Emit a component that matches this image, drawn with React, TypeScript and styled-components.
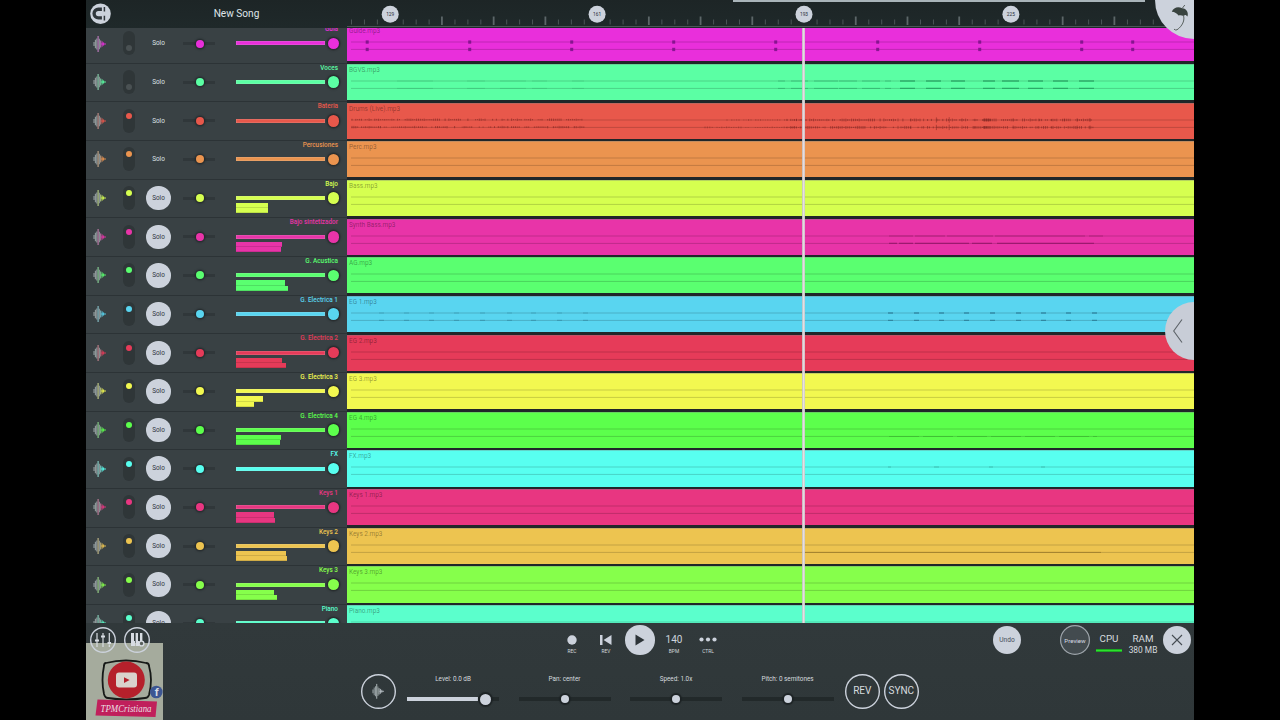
import React from "react";
import styled, { createGlobalStyle } from "styled-components";

const GlobalStyle = createGlobalStyle`
  * { box-sizing: border-box; }
  body { margin: 0; background: #000; font-family: Roboto, "Liberation Sans", sans-serif; }
`;

const LIGHT = "#ccd2dc";

const Stage = styled.div`
  width: 1280px;
  height: 720px;
  display: flex;
  justify-content: center;
  background: #000;
  overflow: hidden;
`;

const Studio = styled.div`
  position: relative;
  width: 1108px;
  height: 720px;
  display: flex;
  flex-direction: column;
  overflow: hidden;
  background: #30383a;
`;

const Header = styled.header`
  height: 28px;
  flex: none;
  display: grid;
  grid-template-columns: 29px 243px 836px;
  background: linear-gradient(#1d2526, #1f292a);
`;

const Magnet = styled.div`
  padding: 3px 0 0 4px;
  svg { display: block; }
`;

const SongTitle = styled.div`
  text-align: center;
  font-size: 10.1px;
  line-height: 27px;
  color: #dfe4e8;
`;

const RulerBox = styled.div`
  margin-left: -11px;
  svg { display: block; }
`;

const Workspace = styled.main`
  height: 595px;
  flex: none;
  overflow: hidden;
  background: #2b3135;
`;

const TrackList = styled.div`
  margin-top: -3.83px;
`;

const TrackRow = styled.div`
  height: 38.67px;
  display: grid;
  grid-template-columns: 261px 847px;
`;

const Strip = styled.div`
  display: grid;
  grid-template-columns: 27px 32px 27px 54px 121px;
  align-items: center;
  box-shadow: inset 0 1px 0 #2c3336;
  background: #394144;
  height: 38.67px;
`;

const WaveCell = styled.div`
  padding-left: 7px;
  svg { display: block; }
`;

const Mute = styled.div<{ $on: boolean }>`
  width: 12px;
  height: 24px;
  justify-self: center;
  border-radius: 6px;
  background: #2f3638;
  display: flex;
  justify-content: center;
  align-items: ${(p) => (p.$on ? "flex-start" : "flex-end")};
  padding: ${(p) => (p.$on ? "4px 0 0" : "0 0 4px")};
  margin-top: ${(p) => (p.$on ? "0" : "-1px")};
`;

const MuteDot = styled.div<{ $c: string }>`
  width: 6px;
  height: 6px;
  border-radius: 50%;
  background: ${(p) => p.$c};
`;

const Solo = styled.div<{ $on: boolean }>`
  width: 24.5px;
  height: 24.5px;
  justify-self: center;
  border-radius: 50%;
  text-align: center;
  font-size: 6.4px;
  line-height: 24px;
  background: ${(p) => (p.$on ? LIGHT : "transparent")};
  color: ${(p) => (p.$on ? "#30363d" : "#dde1e5")};
`;

const PanTrack = styled.div`
  width: 32px;
  height: 3px;
  justify-self: center;
  background: #30373a;
  display: flex;
  align-items: center;
  justify-content: center;
`;

const PanKnob = styled.div<{ $c: string }>`
  flex: none;
  width: 8px;
  height: 8px;
  margin-left: 1px;
  border-radius: 50%;
  background: ${(p) => p.$c};
  box-shadow: 0 0 1.5px 1.5px rgba(32, 38, 40, 0.75);
`;

const FaderCell = styled.div`
  height: 38.67px;
  padding-left: 10px;
  display: flex;
  flex-direction: column;
`;

const TrackName = styled.div<{ $c: string }>`
  height: 12.3px;
  line-height: 11px;
  padding-right: 9px;
  text-align: right;
  font-size: 6.4px;
  font-weight: 500;
  white-space: nowrap;
  color: ${(p) => p.$c};
`;

const Fader = styled.div`
  height: 14px;
  display: flex;
  align-items: center;
  gap: 2.5px;
`;

const FaderFill = styled.div<{ $c: string }>`
  width: 89px;
  height: 4px;
  background: ${(p) => p.$c};
  box-shadow: inset 0 0 0 0.5px rgba(220, 220, 220, 0.3);
`;

const FaderKnob = styled.div<{ $c: string }>`
  width: 11.5px;
  height: 11.5px;
  border-radius: 50%;
  background: ${(p) => p.$c};
  box-shadow: 0 0 1.5px 1.5px rgba(32, 36, 38, 0.75);
`;

const Meter = styled.div<{ $c: string }>`
  height: 5.2px;
  background: ${(p) => p.$c};
  box-shadow: inset 0 -0.5px 0 rgba(0, 0, 0, 0.25);
`;

const Meters = styled.div`
  margin-top: -2px;
`;

const Lane = styled.div`
  padding-top: 1.1px;
  background: #202629;
`;

const Clip = styled.div<{ $c: string }>`
  height: 36.2px;
  background: ${(p) => p.$c};
  border-top: 1px solid rgba(120, 130, 130, 0.35);
  display: grid;
`;

const ClipLabel = styled.div`
  grid-area: 1 / 1;
  padding-left: 2px;
  font-size: 6.45px;
  line-height: 11px;
  color: rgba(0, 0, 0, 0.38);
`;

const ClipWave = styled.svg`
  grid-area: 1 / 1;
  display: block;
`;

const Playhead = styled.div`
  position: absolute;
  left: 715.5px;
  top: 28px;
  width: 3px;
  height: 595px;
  background: linear-gradient(90deg, #b9bcbc, #efe4ea 55%, #c3c3c3);
  opacity: 0.93;
`;

const Footer = styled.footer`
  flex: 1;
  background: linear-gradient(#31393b, #2f3739);
  display: flex;
  flex-direction: column;
`;

const Transport = styled.div`
  height: 34px;
  display: grid;
  grid-template-columns: 1fr 170px 1fr;
`;

const Group = styled.div<{ $end?: boolean }>`
  position: relative;
  z-index: 2;
  display: flex;
  justify-content: ${(p) => (p.$end ? "flex-end" : "flex-start")};
`;

const Cell = styled.div`
  width: 34px;
  height: 34px;
  display: flex;
  flex-direction: column;
  align-items: center;
  justify-content: center;
  color: ${LIGHT};
  svg { display: block; flex: none; }
`;

const Captioned = styled(Cell)`
  justify-content: flex-start;
  padding-top: 9px;
`;

const IconBox = styled.div`
  height: 15px;
  display: flex;
  align-items: center;
`;

const Caption = styled.div`
  margin-top: 0.5px;
  font-size: 4.9px;
  line-height: 6px;
  color: #d4d9dd;
`;

const Readout = styled.div`
  font-size: 10px;
  line-height: 13px;
`;

const Round = styled.div<{ $size: number; $filled?: boolean }>`
  width: ${(p) => p.$size}px;
  height: ${(p) => p.$size}px;
  flex: none;
  border-radius: 50%;
  display: flex;
  align-items: center;
  justify-content: center;
  background: ${(p) => (p.$filled ? LIGHT : "transparent")};
  box-shadow: ${(p) => (p.$filled ? "none" : `inset 0 0 0 1.4px ${LIGHT}`)};
  color: ${(p) => (p.$filled ? "#454c56" : "#d7dce2")};
  font-size: 6.6px;
  svg { display: block; }
`;

const PreviewButton = styled(Round)`
  background: #434b4f;
  box-shadow: inset 0 0 0 1.2px #9da4aa;
  font-size: 6.1px;
`;

const Stat = styled.div`
  width: 34px;
  height: 34px;
  display: flex;
  flex-direction: column;
  align-items: center;
  padding-top: 10px;
  color: #d6dbdf;
  font-size: 9.8px;
  line-height: 12px;
  white-space: nowrap;
`;

const StatDetail = styled.div`
  font-size: 8.4px;
  line-height: 10px;
`;

const CpuBar = styled.div`
  width: 26px;
  height: 3px;
  margin-top: 4px;
  background: linear-gradient(#0c7a18, #2ee02e 35% 65%, #0c7a18);
`;

const Controls = styled.div`
  flex: 1;
  display: flex;
  align-items: flex-start;
  padding: 17px 0 0 274.5px;
`;

const RevButton = styled(Round)`
  font-size: 10px;
  color: #d6dbdf;
  padding-bottom: 2px;
  margin-left: 11.5px;
`;

const SyncButton = styled(RevButton)`
  margin-left: 4.5px;
`;

const SliderBox = styled.div<{ $first?: boolean }>`
  width: 92px;
  margin-left: ${(p) => (p.$first ? "11.5px" : "19.5px")};
  display: flex;
  flex-direction: column;
`;

const SliderLabel = styled.div`
  font-size: 6.35px;
  line-height: 11px;
  text-align: center;
  color: #d6dbdf;
  white-space: nowrap;
`;

const SliderRail = styled.div<{ $at: number }>`
  margin-top: 12px;
  height: 4px;
  display: flex;
  align-items: center;
  padding-left: ${(p) => p.$at}px;
  background: #22292a;
`;

const LevelRail = styled(SliderRail)`
  padding-left: 0;
  background: linear-gradient(90deg, ${LIGHT} 71px, #22292a 71px);
`;

const SliderKnob = styled.div<{ $size: number; $shift?: number }>`
  flex: none;
  width: ${(p) => p.$size}px;
  height: ${(p) => p.$size}px;
  margin-left: ${(p) => p.$shift || 0}px;
  border-radius: 50%;
  background: ${LIGHT};
  box-shadow: 0 0 1px 2px #1d2325;
`;

const HomeBar = styled.div`
  position: absolute;
  left: 647px;
  top: 0;
  width: 412px;
  height: 1.5px;
  background: #a9b4b9;
`;

const CornerButton = styled.div`
  position: absolute;
  left: 1069px;
  top: -39px;
  width: 78px;
  height: 78px;
  padding-top: 39px;
  border-radius: 50%;
  background: ${LIGHT};
  svg { display: block; }
`;

const DrawerButton = styled.div`
  position: absolute;
  left: 1079px;
  top: 302px;
  width: 58px;
  height: 58px;
  border-radius: 50%;
  background: #c8cdd7;
`;

const Watermark = styled.div`
  position: absolute;
  left: 0;
  top: 643px;
  width: 77px;
  height: 77px;
  background: #a5ab9d;
  z-index: 1;
  svg { display: block; }
`;

type Track = {
  name: string;
  file: string;
  color: string;
  mute?: boolean;
  solo?: boolean;
  meters?: [number, number];
  wave?: string;
};

const tracks: Track[] = [
  { name: "Guia", file: "Guide.mp3", color: "#e92fdb", mute: true, wave: "guide" },
  { name: "Voces", file: "BGVS.mp3", color: "#5bffa4", mute: true, wave: "voices" },
  { name: "Bateria", file: "Drums (Live).mp3", color: "#e8584b", wave: "drums" },
  { name: "Percusiones", file: "Perc.mp3", color: "#eb944f" },
  { name: "Bajo", file: "Bass.mp3", color: "#d6ff50", solo: true, meters: [32, 32] },
  { name: "Bajo sintetizador", file: "Synth Bass.mp3", color: "#e834a8", solo: true, meters: [46, 45], wave: "synth" },
  { name: "G. Acustica", file: "AG.mp3", color: "#5aff70", solo: true, meters: [49, 52] },
  { name: "G. Electrica 1", file: "EG 1.mp3", color: "#59d5f0", solo: true, wave: "electric" },
  { name: "G. Electrica 2", file: "EG 2.mp3", color: "#e63b59", solo: true, meters: [46, 50] },
  { name: "G. Electrica 3", file: "EG 3.mp3", color: "#f2f850", solo: true, meters: [27, 18] },
  { name: "G. Electrica 4", file: "EG 4.mp3", color: "#5cff4c", solo: true, meters: [45, 44], wave: "eg4" },
  { name: "FX", file: "FX.mp3", color: "#58fff0", solo: true, wave: "fx" },
  { name: "Keys 1", file: "Keys 1.mp3", color: "#e83681", solo: true, meters: [38, 39] },
  { name: "Keys 2", file: "Keys 2.mp3", color: "#edc450", solo: true, meters: [50, 51], wave: "keys2" },
  { name: "Keys 3", file: "Keys 3.mp3", color: "#86ff4b", solo: true, meters: [38, 41] },
  { name: "Piano", file: "Piano.mp3", color: "#5bffcc", solo: true },
];

// Deterministic noise so every render draws the same peaks.
const noise = (i: number) => {
  const v = Math.sin(i * 12.9898) * 43758.5453;
  return v - Math.floor(v);
};

const peaks = (from: number, to: number, step: number, height: number, y: number, skip: number) => {
  let d = "";
  for (let x = from, i = 1; x < to; x += step, i++) {
    if (noise(i + skip) < 0.2) continue;
    const h = height * (0.35 + 0.65 * noise(i * 3 + skip));
    d += `M${x.toFixed(1)} ${(y - h / 2).toFixed(1)}v${h.toFixed(1)}`;
  }
  return d;
};

const dashes = (list: [number, number][], y: number) =>
  list.map(([x, w]) => `M${x} ${y}h${w}`).join("");

const CH = [16, 23.4];

function WaveDetail({ kind }: { kind?: string }) {
  if (kind === "guide") {
    const xs = [20, 122.5, 224.5, 326.5, 428.5, 530.5, 632.5, 734.5, 785.5];
    return (
      <g fill="#7a1187" opacity="0.85">
        {xs.map((x) => CH.map((y) => <rect key={`${x}-${y}`} x={x - 1.3} y={y - 1.6} width="3" height="3.3" />))}
      </g>
    );
  }
  if (kind === "drums") {
    return (
      <g stroke="#7b2320" fill="none">
        {CH.map((y, i) => (
          <React.Fragment key={y}>
            <path d={peaks(5, 237, 1.9, 2.4, y - 0.3, i * 7)} strokeWidth="1" opacity="0.6" />
            <path d={peaks(i ? 358 : 380, 455, 2.4, 1.8, y, i * 7)} strokeWidth="0.9" opacity="0.5" />
            <path d={peaks(440, 747, 1.9, 3, y, i * 5)} strokeWidth="0.9" opacity="0.65" />
            <path d={peaks(551, 747, 12.8, 6, y, 40)} strokeWidth="1" opacity="0.5" />
            <path d={`M636 ${y}h8`} strokeWidth="2.6" opacity="0.5" />
          </React.Fragment>
        ))}
      </g>
    );
  }
  if (kind === "voices") {
    const spans: [number, number][] = [[553, 15], [579, 15], [604, 14], [636, 12], [655, 17], [681, 15], [706, 15], [732, 15]];
    const faint: [number, number][] = [[431, 7], [444, 17], [467, 24], [492, 18], [515, 18], [538, 6]];
    return (
      <g stroke="#1c8f55" fill="none">
        {CH.map((y) => (
          <React.Fragment key={y}>
            <path d={dashes(spans, y)} strokeWidth="1.4" opacity="0.65" />
            <path d={dashes(faint, y)} strokeWidth="1" opacity="0.4" />
            <path d={dashes([[50, 36], [120, 18], [153, 26], [185, 15], [225, 12]], y)} strokeWidth="1" opacity="0.2" />
          </React.Fragment>
        ))}
      </g>
    );
  }
  if (kind === "synth") {
    return (
      <g stroke="#8b1462" fill="none">
        <path d={dashes([[542, 24], [568, 30], [600, 46], [648, 90], [742, 14]], CH[0])} strokeWidth="1.1" opacity="0.5" />
        <path d={dashes([[542, 8], [552, 14], [568, 54], [625, 20], [650, 97]], CH[1])} strokeWidth="1.4" opacity="0.7" />
      </g>
    );
  }
  if (kind === "electric") {
    const xs = [541, 567, 592, 617, 643, 669, 694, 719, 745];
    const left = [32, 57, 82, 107, 133, 160, 184, 210, 236];
    return (
      <g stroke="#1b637d" fill="none">
        {CH.map((y, i) => (
          <React.Fragment key={y}>
            <path d={dashes(xs.map((x): [number, number] => [x, 5]), y)} strokeWidth={i ? 1.1 : 1.5} opacity="0.55" />
            <path d={dashes(left.map((x): [number, number] => [x, 5]), y)} strokeWidth="1.2" opacity="0.3" />
          </React.Fragment>
        ))}
      </g>
    );
  }
  if (kind === "fx") {
    return <path d={dashes([[541, 3], [587, 5], [642, 4], [694, 4]], CH[0])} stroke="#2a9d93" strokeWidth="1" opacity="0.5" />;
  }
  if (kind === "keys2") {
    return <path d="M455 23.4H754" stroke="#80601a" strokeWidth="1" opacity="0.5" />;
  }
  if (kind === "eg4") {
    return <path d="M542 23.4H750" stroke="#238b1a" strokeWidth="0.8" opacity="0.4" strokeDasharray="30 4" />;
  }
  return null;
}

function WaveIcon({ color, size = 13 }: { color: string; size?: number }) {
  return (
    <svg width={size} height={(size * 18) / 13} viewBox="0 0 13 18">
      <path d="M1 7v4M2.4 4.8v8.4M3.8 3.6v10.8" fill="none" stroke="#929c9e" strokeWidth="1.1" />
      <path d="M6.4 3.8v10.4M7.7 5.6v6.8" fill="none" stroke="#8a9496" strokeWidth="1.1" />
      <path d="M5.1 1v16" fill="none" stroke="#9aa4a4" strokeWidth="1" />
      <path d="M5.1 1v16M7.7 5.6v6.8" fill="none" stroke={color} strokeWidth="0.9" opacity="0.5" />
      <path d="M9.2 6.4v5.2M10.6 7.4v3.2M8 9h5" fill="none" stroke={color} strokeWidth="1" opacity="0.9" />
    </svg>
  );
}

function Ruler() {
  const origin = 43.2;
  const ticks = [];
  for (let i = -3; i < 63; i++) {
    const x = origin + i * 12.932;
    if (x > 810) break;
    const major = ((i % 4) + 4) % 4 === 0;
    const bubble = ((i % 16) + 16) % 16 === 0;
    if (!bubble)
      ticks.push(
        <rect key={i} x={x - (major ? 0.9 : 0.4)} y={major ? 16.5 : 19.5} width={major ? 1.8 : 1} height={major ? 8.5 : 5} fill={major ? "#5c6668" : "#4b5557"} />
      );
  }
  return (
    <svg width="847" height="28" viewBox="0 0 847 28">
      <path d="M0 26.5H847" stroke="#4b5557" strokeWidth="1" />
      {ticks}
      {["129", "161", "193", "225"].map((label, i) => (
        <g key={label}>
          <circle cx={origin + i * 206.9} cy="14.3" r="8.5" fill={LIGHT} />
          <text x={origin + i * 206.9} y="16" textAnchor="middle" fontSize="4.8" fill="#252b35">
            {label}
          </text>
        </g>
      ))}
    </svg>
  );
}

function TrackLine({ track }: { track: Track }) {
  const { color } = track;
  return (
    <TrackRow>
      <Strip>
        <WaveCell>
          <WaveIcon color={color} />
        </WaveCell>
        <Mute $on={!track.mute}>
          <MuteDot $c={track.mute ? "#4a5153" : color} />
        </Mute>
        <Solo $on={!!track.solo}>Solo</Solo>
        <PanTrack>
          <PanKnob $c={color} />
        </PanTrack>
        <FaderCell>
          <TrackName $c={color}>{track.name}</TrackName>
          <Fader>
            <FaderFill $c={color} />
            <FaderKnob $c={color} />
          </Fader>
          {track.meters && (
            <Meters>
              {track.meters.map((w, i) => (
                <Meter key={i} $c={color} style={{ width: w }} />
              ))}
            </Meters>
          )}
        </FaderCell>
      </Strip>
      <Lane>
        <Clip $c={color}>
          <ClipLabel>{track.file}</ClipLabel>
          <ClipWave width="847" height="35" viewBox="0 0 847 35">
            <path d={`M4 ${CH[0]}H847M4 ${CH[1]}H847`} stroke="#000" strokeOpacity="0.2" strokeWidth="0.9" />
            <WaveDetail kind={track.wave} />
          </ClipWave>
        </Clip>
      </Lane>
    </TrackRow>
  );
}

function CenterSlider({ label }: { label: string }) {
  return (
    <SliderBox>
      <SliderLabel>{label}</SliderLabel>
      <SliderRail $at={42}>
        <SliderKnob $size={8} />
      </SliderRail>
    </SliderBox>
  );
}

export default function App() {
  return (
    <Stage>
      <GlobalStyle />
      <Studio>
        <Header>
          <Magnet>
            <svg width="21" height="21" viewBox="0 0 21 21">
              <circle cx="10.5" cy="10.7" r="10.3" fill={LIGHT} />
              <path d="M11.9 6.3H8.4a4.3 4.3 0 0 0 0 8.6h3.5" fill="none" stroke="#30373c" strokeWidth="3.4" />
              <path d="M14.4 3.9v4.6M14.4 12.8v4.6" stroke="#30373c" strokeWidth="1.5" />
            </svg>
          </Magnet>
          <SongTitle>New Song</SongTitle>
          <RulerBox>
            <Ruler />
          </RulerBox>
        </Header>
        <Workspace>
          <TrackList>
            {tracks.map((t) => (
              <TrackLine key={t.name} track={t} />
            ))}
          </TrackList>
        </Workspace>
        <Footer>
          <Transport>
            <Group>
              <Cell>
                <Round $size={26}>
                  <svg width="20" height="20" viewBox="0 0 20 20" stroke="#d7dce2" strokeWidth="1.2" fill="none">
                    <path d="M4 3v14M10 3v14M16.3 3v9M16.3 14.5v2.5" />
                    <path d="M2 10.5h4M8 6.5h4M14.5 13h3.6" strokeWidth="2" />
                  </svg>
                </Round>
              </Cell>
              <Cell>
                <Round $size={26}>
                  <svg width="20" height="20" viewBox="0 0 20 20">
                    <path d="M4 3h3v8h1v5H4zM8.6 3H11v8h1v5H8.6zM13 3h2.4v8H13z" fill="#d7dce2" />
                    <circle cx="14.5" cy="13.5" r="2.4" fill="#59605c" stroke="#d7dce2" strokeWidth="1.4" />
                  </svg>
                </Round>
              </Cell>
            </Group>
            <Group>
              <Captioned>
                <IconBox>
                  <svg width="10" height="10"><circle cx="5" cy="5" r="4.7" fill={LIGHT} /></svg>
                </IconBox>
                <Caption>REC</Caption>
              </Captioned>
              <Captioned>
                <IconBox>
                  <svg width="12" height="10"><path d="M0 0h2.5v10H0zM11.5 0v10L3.5 5z" fill={LIGHT} /></svg>
                </IconBox>
                <Caption>REV</Caption>
              </Captioned>
              <Cell>
                <Round $size={29.5} $filled>
                  <svg width="10" height="12"><path d="M0.5 0.5L9.5 6L0.5 11.5z" fill="#2c3338" /></svg>
                </Round>
              </Cell>
              <Captioned>
                <IconBox>
                  <Readout>140</Readout>
                </IconBox>
                <Caption>BPM</Caption>
              </Captioned>
              <Captioned>
                <IconBox>
                  <svg width="18" height="5" fill={LIGHT}>
                    <circle cx="2.5" cy="2.5" r="2.1" />
                    <circle cx="9" cy="2.5" r="2.1" />
                    <circle cx="15.5" cy="2.5" r="2.1" />
                  </svg>
                </IconBox>
                <Caption>CTRL</Caption>
              </Captioned>
            </Group>
            <Group $end>
              <Cell>
                <Round $size={28} $filled>Undo</Round>
              </Cell>
              <Cell />
              <Cell>
                <PreviewButton $size={30}>Preview</PreviewButton>
              </Cell>
              <Stat>
                CPU
                <CpuBar />
              </Stat>
              <Stat>
                RAM
                <StatDetail>380 MB</StatDetail>
              </Stat>
              <Cell>
                <Round $size={28} $filled>
                  <svg width="12" height="12"><path d="M1 1L11 11M11 1L1 11" stroke="#454c52" strokeWidth="1.1" /></svg>
                </Round>
              </Cell>
            </Group>
          </Transport>
          <Controls>
            <Round $size={35}>
              <WaveIcon color="#b9c0c6" size={12} />
            </Round>
            <SliderBox $first>
              <SliderLabel>Level: 0.0 dB</SliderLabel>
              <LevelRail $at={0}>
                <SliderKnob $size={11} $shift={73} />
              </LevelRail>
            </SliderBox>
            <CenterSlider label="Pan: center" />
            <CenterSlider label="Speed: 1.0x" />
            <CenterSlider label="Pitch: 0 semitones" />
            <RevButton $size={34.5}>REV</RevButton>
            <SyncButton $size={34.5}>SYNC</SyncButton>
          </Controls>
        </Footer>

        <Playhead />
        <HomeBar />
        <CornerButton>
          <svg width="39" height="39" viewBox="0 0 39 39">
            <path d="M16.8 11.8C18.5 7.5 23 6 27.2 8.3C31.5 8.4 33.8 12.8 32.5 16.6C31 14.6 29.8 14.5 28.8 16C26.8 15.4 25.2 15 23.5 15.6C22 13.4 19.8 12 16.8 11.8Z" fill="#39433f" />
            <path d="M27.5 8L29.8 5M28.2 15C30.5 20 27 26.5 22 29.8Q20.4 30.4 19 29.2" fill="none" stroke="#59615f" strokeWidth="1" />
          </svg>
        </CornerButton>
        <DrawerButton>
          <svg width="29" height="58" viewBox="0 0 29 58">
            <path d="M17 17.5L8.7 29L17 40.5" fill="none" stroke="#5c6268" strokeWidth="1.1" />
          </svg>
        </DrawerButton>
        <Watermark>
          <svg width="77" height="77" viewBox="0 0 77 77">
            <path d="M20 20Q40 15 60 20Q63 20 63 23Q67 37 63 52Q62 55 59 55Q40 58 22 55Q19 55 18 51Q15 37 18 23Q18 20 20 20Z" fill="none" stroke="#161917" strokeWidth="1.8" />
            <circle cx="40.3" cy="37" r="18.5" fill="#b5202b" />
            <rect x="30" y="29.5" width="21" height="15" rx="3" fill="#d9d2cc" />
            <path d="M38 34.3v5.6l5.6-2.8z" fill="#b5202b" />
            <circle cx="70.3" cy="49" r="6.3" fill="#3d5692" />
            <text x="70.6" y="53.2" textAnchor="middle" fontSize="11" fontWeight="700" fill="#d8dce6">f</text>
            <path d="M11.5 56.5L71 58.5L69.5 74L9.5 72.5Z" fill="#c01f5b" />
            <text x="14.5" y="69" fontSize="9.6" fontStyle="italic" textLength="51" lengthAdjust="spacingAndGlyphs" fill="#eadfe2" fontFamily="'Liberation Serif', serif">TPMCristiana</text>
          </svg>
        </Watermark>
      </Studio>
    </Stage>
  );
}
